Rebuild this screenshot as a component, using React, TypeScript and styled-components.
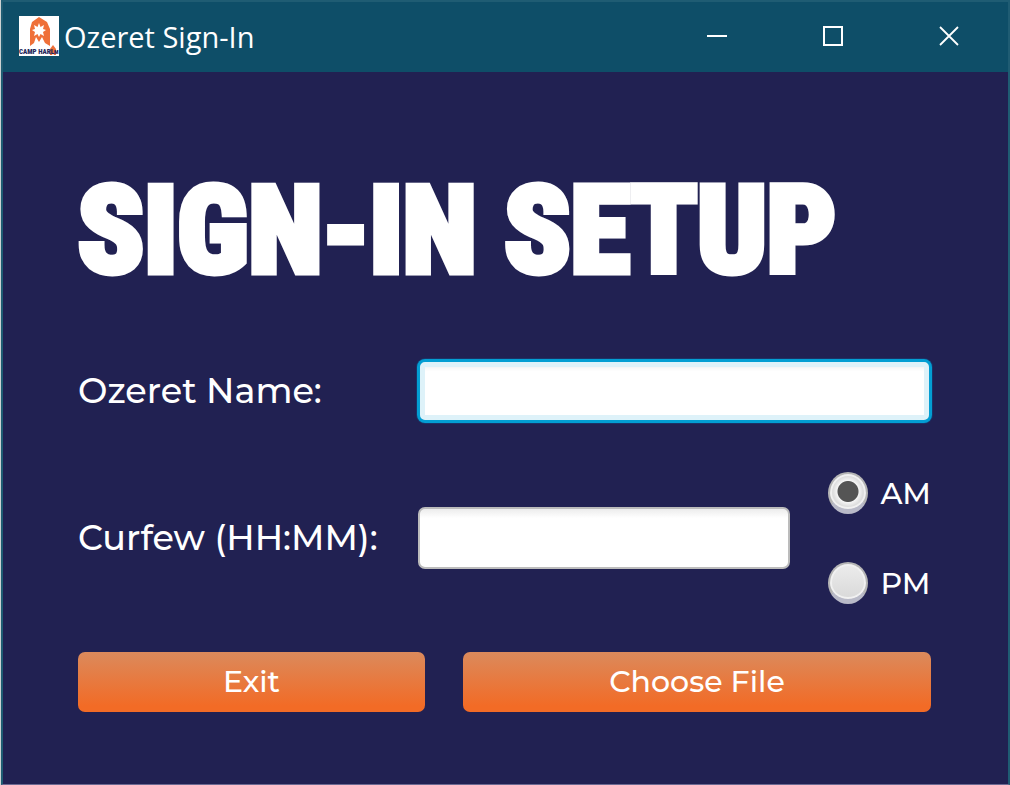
import React, { useState } from "react";
import styled, { createGlobalStyle } from "styled-components";

const GlobalStyle = createGlobalStyle`
  * { box-sizing: border-box; }
  body {
    margin: 0;
    background: #ccd2d2;
    font-family: Montserrat, Inter, "Liberation Sans", sans-serif;
    font-weight: 500;
    color: #fff;
  }
`;

const Desktop = styled.div`
  display: flex;
  min-height: 100vh;
  padding-left: 1px;
`;

const Window = styled.div`
  flex: 1;
  min-width: 0;
  display: flex;
  flex-direction: column;
  background: #212152;
  border: 2px solid #1f5c73;
  border-bottom: 1px solid #6c6a92;
`;

const TitleBar = styled.header`
  display: flex;
  align-items: center;
  height: 70px;
  padding: 0 1px 2px 16px;
  background: #0e4e68;
`;

const AppTitle = styled.span`
  flex: 1;
  margin-left: 5px;
  padding-top: 2px;
  font-family: "Open Sans", "Noto Sans", sans-serif;
  font-size: 29px;
  font-weight: 400;
  line-height: 40px;
`;

const WindowButton = styled.button`
  display: flex;
  align-items: center;
  justify-content: center;
  width: 116px;
  height: 68px;
  padding: 0;
  border: 0;
  background: transparent;
  color: #fff;
`;

const Content = styled.main`
  padding: 90px 77px 72px 75px;
`;

const Heading = styled.h1`
  margin: 0 0 59px;
  font-family: "Roboto Condensed", Roboto, "Liberation Sans", sans-serif;
  font-size: 121px;
  font-weight: 800;
  line-height: 139px;
  white-space: nowrap;
  -webkit-text-stroke: 7px #fff;
`;

const Form = styled.form`
  display: flex;
  flex-direction: column;
`;

const Row = styled.div<{ $space: number }>`
  display: flex;
  align-items: center;
  margin-bottom: ${(p) => p.$space}px;
`;

const FieldLabel = styled.label`
  flex: 0 0 340px;
  font-size: 35px;
  line-height: 44px;
`;

const TextField = styled.input`
  flex: 1;
  min-width: 0;
  height: 62px;
  padding: 0 16px;
  border: 2px solid #bcbcbc;
  border-radius: 7px;
  outline: 0;
  background: linear-gradient(#ececec, #fff 9px);
  color: #333;
  font: inherit;
  font-size: 30px;

  &:focus {
    border-color: #039ed3;
    background: #fff;
    box-shadow: 0 0 0 1px #039ed3, 0 0 0 2px #1b3468, inset 0 0 0 5px #def2f9,
      inset 0 8px 4px -2px #f0f0f0;
  }
`;

const RadioGroup = styled.div`
  display: flex;
  flex-direction: column;
  gap: 48px;
  flex: none;
  margin-left: 38px;
`;

const RadioLabel = styled.label`
  display: flex;
  align-items: center;
  gap: 12px;
  height: 42px;
  font-size: 30px;
`;

const Radio = styled.input`
  appearance: none;
  flex: none;
  width: 40px;
  height: 42px;
  margin: 0;
  border: 2px solid #b5b5b5;
  border-bottom: 5px solid #b9bac8;
  border-radius: 50%;
  background: linear-gradient(#ececec, #d9d9d9);
  box-shadow: inset 0 0 0 2px #f1f1f1;

  &:checked {
    background: radial-gradient(circle, #555 0 10px, #f5f5f5 11px, #dedede 15px);
  }
`;

const ActionRow = styled.div`
  display: grid;
  grid-template-columns: 347fr 468fr;
  gap: 38px;
`;

const ActionButton = styled.button`
  height: 60px;
  padding: 0 0 2px;
  border: 0;
  border-radius: 7px;
  background: linear-gradient(#db8a5c, #f26b26 90%);
  color: #fff;
  font: inherit;
  font-size: 30px;
`;

const CampLogo = () => (
  <svg width="40" height="40" viewBox="0 0 40 40" aria-hidden="true">
    <rect width="40" height="40" fill="#fff" />
    <path d="M20 1L28 6L31 13V30L26 27L23 21L20 26L17 21L15 27L11 30V13L13 6Z" fill="#ef7039" />
    <path d="M20 7l1.500 4 3.500-2-1 4 3 1-3 2 1 4-3.500-2-1.500 3-1.500-3-3.500 2 1-4-3-2 3-1-1-4 3.500 2z" fill="#fff" />
    <path d="M34 29l3 4v6h-2l-1-2-1 2h-2v-6z" fill="#ef7039" />
    <text x="0" y="38" fontFamily="Roboto Condensed, Roboto" fontSize="7" fontWeight="900" fill="#25285b">
      CAMP HARL
    </text>
    <text x="35" y="38" fontFamily="Roboto Condensed, Roboto" fontSize="6" fontWeight="900" fill="#25285b">
      M
    </text>
  </svg>
);

export default function App() {
  const [period, setPeriod] = useState("AM");

  return (
    <Desktop>
      <GlobalStyle />
      <Window>
        <TitleBar>
          <CampLogo />
          <AppTitle>Ozeret Sign-In</AppTitle>
          <WindowButton aria-label="Minimize">
            <svg width="20" height="20"><path d="M0 10H20" stroke="currentColor" strokeWidth="2" /></svg>
          </WindowButton>
          <WindowButton aria-label="Maximize">
            <svg width="20" height="20"><path d="M1 1H19V19H1Z" fill="none" stroke="currentColor" strokeWidth="2" /></svg>
          </WindowButton>
          <WindowButton aria-label="Close">
            <svg width="20" height="20"><path d="M1 1L19 19M19 1L1 19" stroke="currentColor" strokeWidth="1.8" /></svg>
          </WindowButton>
        </TitleBar>
        <Content>
          <Heading>SIGN-IN SETUP</Heading>
          <Form onSubmit={(e) => e.preventDefault()}>
            <Row $space={50}>
              <FieldLabel htmlFor="ozeret-name">Ozeret Name:</FieldLabel>
              <TextField id="ozeret-name" type="text" autoFocus />
            </Row>
            <Row $space={48}>
              <FieldLabel htmlFor="curfew">Curfew (HH:MM):</FieldLabel>
              <TextField id="curfew" type="text" />
              <RadioGroup role="radiogroup" aria-label="Curfew period">
                {["AM", "PM"].map((value) => (
                  <RadioLabel key={value}>
                    <Radio
                      type="radio"
                      name="period"
                      checked={period === value}
                      onChange={() => setPeriod(value)}
                    />
                    {value}
                  </RadioLabel>
                ))}
              </RadioGroup>
            </Row>
            <ActionRow>
              <ActionButton type="button">Exit</ActionButton>
              <ActionButton type="submit">Choose File</ActionButton>
            </ActionRow>
          </Form>
        </Content>
      </Window>
    </Desktop>
  );
}
